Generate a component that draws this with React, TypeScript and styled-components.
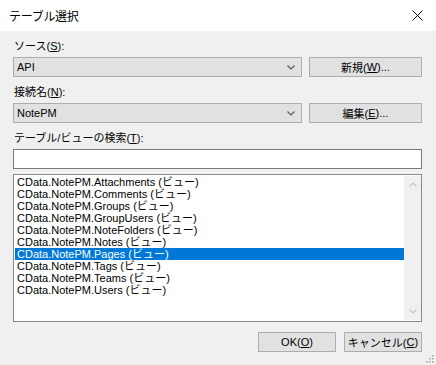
import React, { useState } from 'react';
import styled, { createGlobalStyle } from 'styled-components';

const GlobalStyle = createGlobalStyle`
  html, body {
    margin: 0;
    padding: 0;
    background: #f0f0f0;
  }
  * {
    box-sizing: border-box;
  }
`;

const UI_FONT = `"Liberation Sans", "Noto Sans CJK JP", sans-serif`;

const Dialog = styled.div`
  width: 436px;
  height: 365px;
  background: #f0f0f0;
  font-family: ${UI_FONT};
  color: #000;
  position: relative;
  overflow: hidden;
`;

const TitleBar = styled.div`
  height: 31px;
  background: #fff;
  display: flex;
  align-items: center;
  justify-content: space-between;
  padding: 0 8px 0 9px;
`;

const Title = styled.div`
  font-size: 12px;
  letter-spacing: -0.3px;
`;

const CloseIcon = styled.svg`
  width: 11px;
  height: 11px;
  margin-right: 5px;
`;

const Body = styled.div`
  padding: 8px 14px 0 13px;
  display: flex;
  flex-direction: column;
`;

const Label = styled.div<{ $top?: number }>`
  font-size: 11px;
  line-height: 15px;
  height: 15px;
  padding-left: 1px;
  margin-top: ${(p) => p.$top ?? 0}px;
  margin-bottom: 3px;
`;

const Row = styled.div`
  display: grid;
  grid-template-columns: 289px 113px;
  column-gap: 7px;
  height: 20px;
`;

const Combo = styled.div`
  background: #e1e1e1;
  border: 1px solid #adadad;
  display: flex;
  align-items: center;
  justify-content: space-between;
  padding: 0 6px 0 3px;
  font-size: 11px;
`;

const Button = styled.div<{ $w?: number }>`
  background: #e1e1e1;
  border: 1px solid #adadad;
  display: flex;
  align-items: center;
  justify-content: center;
  font-size: 11px;
  height: 20px;
  width: ${(p) => (p.$w ? `${p.$w}px` : 'auto')};
`;

const SearchBox = styled.div`
  height: 20px;
  background: #fff;
  border: 1px solid #7a7a7a;
`;

const ListBox = styled.div`
  margin-top: 5px;
  height: 148px;
  background: #fff;
  border: 1px solid #828790;
  display: flex;
  padding: 1px 0 1px 1px;
`;

const Items = styled.div`
  flex: 1;
  display: flex;
  flex-direction: column;
`;

const Item = styled.div<{ $selected?: boolean }>`
  height: 12px;
  line-height: 12px;
  font-size: 11px;
  padding-left: 2px;
  white-space: nowrap;
  background: ${(p) => (p.$selected ? '#0078d7' : 'transparent')};
  color: ${(p) => (p.$selected ? '#fff' : '#000')};
`;

const ScrollBar = styled.div`
  width: 17px;
  background: #f0f0f0;
  display: flex;
  flex-direction: column;
  justify-content: space-between;
  align-items: center;
  padding: 6px 0 6px;
`;

const Footer = styled.div`
  display: flex;
  justify-content: flex-end;
  gap: 8px;
  margin-top: 10px;
`;

const Grip = styled.svg`
  position: absolute;
  right: 2px;
  bottom: 2px;
`;

const Chevron = ({ color = '#5a5a5a', up = false }: { color?: string; up?: boolean }) => (
  <svg width="8" height="5" viewBox="0 0 8 5">
    <polyline
      points={up ? '0.5,4.5 4,1 7.5,4.5' : '0.5,0.5 4,4 7.5,0.5'}
      fill="none"
      stroke={color}
      strokeWidth="1.2"
    />
  </svg>
);

const tables = [
  'Attachments',
  'Comments',
  'Groups',
  'GroupUsers',
  'NoteFolders',
  'Notes',
  'Pages',
  'Tags',
  'Teams',
  'Users',
];

export default function App() {
  const [selected, setSelected] = useState('Pages');
  return (
    <Dialog>
      <GlobalStyle />
      <TitleBar>
        <Title>テーブル選択</Title>
        <CloseIcon viewBox="0 0 11 11">
          <path d="M0.5 0.5 L10.5 10.5 M10.5 0.5 L0.5 10.5" stroke="#000" strokeWidth="1" />
        </CloseIcon>
      </TitleBar>
      <Body>
        <Label>
          ソース(<u>S</u>):
        </Label>
        <Row>
          <Combo>
            <span>API</span>
            <Chevron />
          </Combo>
          <Button>
            新規(<u>W</u>)...
          </Button>
        </Row>
        <Label $top={8}>
          接続名(<u>N</u>):
        </Label>
        <Row>
          <Combo>
            <span>NotePM</span>
            <Chevron />
          </Combo>
          <Button>
            編集(<u>E</u>)...
          </Button>
        </Row>
        <Label $top={8}>
          テーブル/ビューの検索(<u>T</u>):
        </Label>
        <SearchBox />
        <ListBox>
          <Items>
            {tables.map((t) => (
              <Item key={t} $selected={t === selected} onClick={() => setSelected(t)}>
                CData.NotePM.{t} (ビュー)
              </Item>
            ))}
          </Items>
          <ScrollBar>
            <Chevron up color="#c2c2c2" />
            <Chevron color="#c2c2c2" />
          </ScrollBar>
        </ListBox>
        <Footer>
          <Button $w={78}>
            OK(<u>O</u>)
          </Button>
          <Button $w={78}>
            キャンセル(<u>C</u>)
          </Button>
        </Footer>
      </Body>
      <Grip width="10" height="10" viewBox="0 0 10 10">
        {[
          [8, 2],
          [8, 5],
          [5, 5],
          [8, 8],
          [5, 8],
          [2, 8],
        ].map(([x, y]) => (
          <rect key={`${x}-${y}`} x={x} y={y} width="1.5" height="1.5" fill="#a0a0a0" />
        ))}
      </Grip>
    </Dialog>
  );
}
